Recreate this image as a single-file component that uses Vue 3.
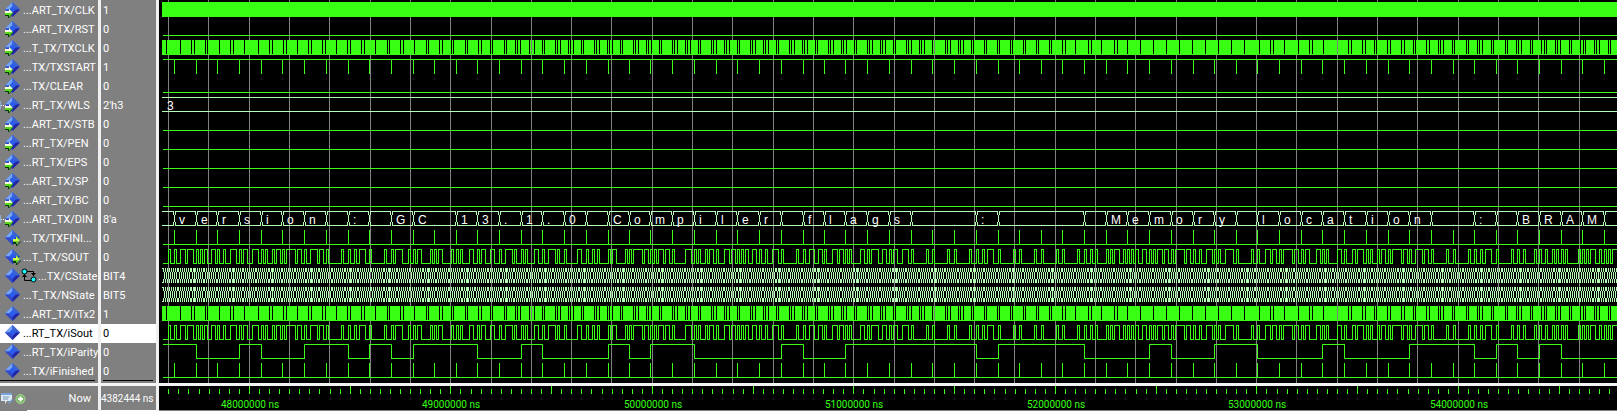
<script setup>
const signals = [
  { name: '...ART_TX/CLK', value: '1', port: 'in' },
  { name: '...ART_TX/RST', value: '0', port: 'in' },
  { name: '...T_TX/TXCLK', value: '0', port: 'in' },
  { name: '...TX/TXSTART', value: '1', port: 'in' },
  { name: '...TX/CLEAR', value: '0', port: 'in' },
  { name: '...RT_TX/WLS', value: "2'h3", port: 'in', bus: true },
  { name: '...ART_TX/STB', value: '0', port: 'in' },
  { name: '...RT_TX/PEN', value: '0', port: 'in' },
  { name: '...RT_TX/EPS', value: '0', port: 'in' },
  { name: '...ART_TX/SP', value: '0', port: 'in' },
  { name: '...ART_TX/BC', value: '0', port: 'in' },
  { name: '...ART_TX/DIN', value: "8'a", port: 'in', bus: true },
  { name: '...TX/TXFINI...', value: '0', port: 'out' },
  { name: '...T_TX/SOUT', value: '0', port: 'out' },
  { name: '...TX/CState', value: 'BIT4', fsm: true },
  { name: '...T_TX/NState', value: 'BIT5' },
  { name: '...ART_TX/iTx2', value: '1' },
  { name: '...RT_TX/iSout', value: '0', selected: true },
  { name: '...RT_TX/iParity', value: '0' },
  { name: '...TX/iFinished', value: '0' },
]

const START = 163
const END = 2400
const PITCH = 19
const top = (row) => 2 + row * PITCH

// Start of every transmitted character on the time axis
const frames = [
  174, 196, 217, 239, 261, 282, 304, 326, 348, 369, 391, 413, 434, 456, 477, 499, 521,
  542, 564, 586, 608, 629, 650, 672, 694, 716, 737, 759, 781, 803, 824, 845, 867, 889,
  911, 932, 954, 976, 998, 1019, 1041, 1062, 1084, 1106, 1127, 1149, 1171, 1193, 1214,
  1236, 1257, 1279, 1301, 1322, 1344, 1366, 1388, 1409, 1431, 1453, 1474, 1496, 1517,
  1539, 1561, 1582, 1604,
]
const text = 'version : GCC13.1.0\nCompiler flags   :    \nMemory location  : BRAM\r'
const BIT = 65 / 30

const gridLines = Array.from({ length: 55 }, (_, i) => Math.floor(168.6 + 40.3 * i))
const ticks = Array.from({ length: 210 }, (_, i) => ({
  x: Math.floor(249.4 + 10.075 * (i - 8)),
  major: (i - 8) % 10 === 0,
}))
const timeLabels = Array.from({ length: 7 }, (_, i) => ({
  x: Math.floor(250 + 201.5 * i),
  label: `${48 + i}000000 ns`,
}))

const flat = (row, high) => `M${START} ${top(row) + (high ? 0 : 14)}.5H${END}`
const flatRows = [1, 4, 6, 7, 8, 9, 10].map((row) => flat(row, false))
const pulses = (row) =>
  flat(row, false) + frames.map((x) => `M${x}.5 ${top(row)}V${top(row) + 14}`).join('')
const startPulses = flat(3, true) + frames.map((x) => `M${x}.5 ${top(3)}V${top(3) + 15}`).join('')

// Serial line: stop bit, start bit, then eight data bits, least significant first
const levels = []
;[152.6, ...frames].forEach((t, k) => {
  const code = k === 0 ? 32 : text.charCodeAt(k - 1)
  const bits = [1, 0]
  for (let b = 0; b < 8; b++) bits.push((code >> b) & 1)
  bits.forEach((v, j) => levels.push({ x: Math.floor(t + 0.3 + j * BIT), v }))
})
const stepPath = (row, list, initial) => {
  const y = (v) => top(row) + (v ? 0.5 : 14.5)
  let last = initial
  let d = `M${START} ${y(initial)}`
  for (const { x, v } of list) {
    if (x >= START && v !== last) {
      d += `H${x + 0.5}V${y(v)}`
      last = v
    }
  }
  return d + `H${END}`
}
const ones = (code) => code.toString(2).replace(/0/g, '').length
const parity = frames.map((x, k) => ({ x, v: k === 0 ? 1 : ones(text.charCodeAt(k)) % 2 }))
parity[66].v = 0

// Character bus: a crossing wherever the value changes
const cells = []
frames.forEach((x, k) => {
  if (k === 0 || text[k] !== text[k - 1]) cells.push({ x, char: text[k].trim() })
})
const busPath = (row, xs) => {
  const y = top(row)
  let d = ''
  let from = START - 1
  for (const x of [...xs, END]) {
    d += `M${from} ${y}.5H${x}M${from} ${y + 14}.5H${x}`
    from = x + 1
  }
  for (const x of xs) {
    d += `M${x - 0.5} ${y}v4M${x + 1.5} ${y}v4M${x + 0.5} ${y + 4}v7`
    d += `M${x - 0.5} ${y + 11}v4M${x + 1.5} ${y + 11}v4`
  }
  return d
}
const dinPath = busPath(11, cells.map((c) => c.x))
const wlsPath = `M162 ${top(5)}.5H${END}M162 ${top(5) + 14}.5H${END}`

const stateEdges = []
for (let x = START + 1; x < 1640; x += BIT) stateEdges.push(Math.floor(x))
const statePath = (row) => {
  let d = busPath(row, stateEdges)
  for (let x = 194; x < 1640; x += 39) d += `M${x}.5 ${top(row)}v15`
  return d
}

// Places where the sampled baud clock leaves a visible gap
const gaps = [
  ...[19, 61, 94, 103, 136, 142, 178, 211, 220, 253, 295, 328, 337, 370, 379, 412, 445, 454,
    487, 496, 529, 562, 571, 604, 613, 646, 682, 688, 721, 730, 763, 799, 805, 838, 847, 874,
    880, 916, 922, 955, 964, 991, 997, 1033, 1039, 1066, 1072, 1081].map((z) => 160 + Math.floor(z / 3)),
]
for (let i = 0; 529 + i * 13 < 1247; i++) {
  const x = 529 + i * 13
  if (x < 1050) gaps.push(x, x + 2)
  else gaps.push(x)
  if (x < 960 && i % 3 !== 1) gaps.push(x + 5)
  if (x >= 1050 && x < 1130 && i % 2) gaps.push(x + 3)
}
gaps.push(
  ...[37, 70, 79, 112, 154, 187, 196, 229, 271, 304, 313, 346, 355, 382, 388, 421, 430, 463,
    472, 499, 505, 538, 547, 574, 580, 589, 616, 622, 658, 664, 691, 697, 706, 733, 739, 775,
    781, 808, 814, 823, 850, 856, 883, 892, 898, 925, 931, 940, 967, 973, 1000, 1009, 1015,
    1042, 1048, 1057, 1084, 1090].map((z) => 1247 + Math.floor(z / 3)),
)
const clockPath = (row) => {
  const y = top(row)
  let d = `M162 ${y + 14}H${END}V${y + 15}H162Z`
  let from = 162
  for (const x of [...gaps, END]) {
    d += `M${from} ${y}H${x}V${y + 14}H${from}Z`
    from = x + 1
  }
  return d
}
</script>

<template>
  <main class="wave">
    <section class="upper">
      <div class="list">
        <table class="signals">
          <tbody>
            <tr v-for="s in signals" :key="s.name" :class="{ selected: s.selected }">
              <th scope="row">
                <div class="name">
                  <svg class="icon" width="22" height="17" viewBox="0 0 22 17">
                    <path v-if="s.bus" d="M0 5h1v8H0z" fill="#8fb0d0" />
                    <path v-if="s.bus" d="M1 9.5h5" stroke="#e8f0ff" stroke-dasharray="1 1" />
                    <path d="M12.5 1L20 8.5L12.5 16L5 8.5Z" fill="#2a5cf0" />
                    <path d="M12.5 1L5 8.5H9L12.5 5Z" fill="#78a6f4" />
                    <path d="M12.5 1L20 8.5H16L12.5 5Z" fill="#3c62cc" />
                    <path d="M5 8.5L12.5 16V12L9 8.5Z" fill="#3448c4" />
                    <path d="M20 8.5L12.5 16V12L16 8.5Z" fill="#2424a0" />
                    <g v-if="s.port === 'in'">
                      <path d="M5 13h4v3l4-4v1l-4 4H8v-2H5z" fill="#063c06" />
                      <path d="M5 10h4V8l4 4l-4 4v-2H5z" fill="#58d818" />
                      <path d="M5 10h4V8l3 3v1H5z" fill="#f4ffe0" />
                    </g>
                    <g v-if="s.port === 'out'">
                      <path d="M13 13h4v3l4-4v1l-4 4h-1v-2h-3z" fill="#063c06" />
                      <path d="M13 10h3V7l4 4l-4 4v-2h-3z" fill="#58d818" />
                      <path d="M13 10h3V8l3 3v1h-6z" fill="#d8ff50" />
                    </g>
                  </svg>
                  <svg v-if="s.fsm" class="fsm" width="16" height="15" viewBox="0 0 16 15">
                    <path d="M5 3.5H12.5V8M10 12.5H3.5V6" fill="none" stroke="#000" />
                    <path d="M10 5h5l-2.5 3zM1 9h5L3.5 6z" fill="#000" />
                    <circle cx="3.5" cy="3.5" r="2.5" fill="#1ff" stroke="#000" />
                    <circle cx="12.5" cy="11.5" r="2.5" fill="#1ff" stroke="#000" />
                  </svg>
                  <span class="text">{{ s.name }}</span>
                </div>
              </th>
              <td>{{ s.value }}</td>
            </tr>
          </tbody>
        </table>
      </div>
      <svg class="plot" shape-rendering="crispEdges">
        <g transform="translate(-159 0)" fill="none">
          <path v-for="x in gridLines" :key="x" class="grid" :d="`M${x}.5 0V383`" />
          <path class="fill" :d="`M162 2H${END}V17H162Z`" />
          <path v-for="d in flatRows" :key="d" class="line" :d="d" />
          <path class="fill" :d="clockPath(2)" />
          <path class="line" :d="startPulses" />
          <path class="bus" :d="wlsPath" />
          <path class="bus" :d="dinPath" />
          <path class="line" :d="pulses(12)" />
          <path class="line" :d="stepPath(13, levels, 0)" />
          <path class="bus" :d="statePath(14)" />
          <path class="bus" :d="statePath(15)" />
          <path class="fill" :d="clockPath(16)" />
          <path class="line" :d="stepPath(17, levels, 0)" />
          <path class="line" :d="stepPath(18, parity, 1)" />
          <path class="line" :d="pulses(19)" />
          <text class="value" x="167" y="110">3</text>
          <text v-for="c in cells" :key="c.x" class="value" :x="c.x + 5" y="224">{{ c.char }}</text>
        </g>
      </svg>
    </section>
    <footer class="lower">
      <div class="now">
        <svg width="30" height="16" viewBox="0 0 30 16">
          <path d="M1 2h11v8H7l-2 3V10H1z" fill="#dce8f4" />
          <path d="M1 2h11v2H1z" fill="#78a4dc" />
          <path d="M3 6h6M3 8h5" stroke="#7898b8" />
          <path d="M8 12l4-4l1 1l-4 4z" fill="#70a0d8" />
          <circle cx="20.5" cy="8" r="4.5" fill="#78b868" stroke="#a8d498" />
          <path d="M18 8h5M20.5 5.5v5" stroke="#fff" stroke-width="2" />
        </svg>
        <span>Now</span>
      </div>
      <div class="now-value">4382444 ns</div>
      <svg class="ruler" shape-rendering="crispEdges">
        <g transform="translate(-159 0)">
          <path v-for="t in ticks" :key="t.x" class="line" :d="`M${t.x}.5 ${t.major ? 0 : 3}V8`" />
          <text v-for="t in timeLabels" :key="t.x" class="time" :x="t.x" y="22">{{ t.label }}</text>
        </g>
      </svg>
    </footer>
  </main>
</template>

<style>
body {
  margin: 0;
  background: #808080;
}
</style>

<style scoped>
.wave {
  font: 11px/19px Roboto, "Liberation Sans", sans-serif;
  color: #fff;
  background: #808080;
  overflow: hidden;
}
.upper,
.lower {
  display: grid;
  grid-template-columns: 159px 1fr;
}
.upper {
  border-bottom: 3px solid #f4f4f4;
}
.list {
  border-right: 3px solid #f0f0f0;
  padding-top: 1px;
  background: linear-gradient(#f0f0f0, #f0f0f0) 98px top / 3px 100% no-repeat;
}
.signals {
  table-layout: fixed;
  width: 100%;
  border-spacing: 0;
}
.signals th,
.signals td {
  padding: 0;
  height: 19px;
  font-weight: normal;
  text-align: left;
  vertical-align: top;
  white-space: nowrap;
  overflow: hidden;
}
.signals th {
  width: 98px;
  border-right: 3px solid #f0f0f0;
}
.signals td {
  padding-left: 2px;
}
.name {
  display: flex;
  align-items: flex-start;
  height: 19px;
}
.icon,
.fsm {
  flex: none;
}
.text {
  padding-left: 1px;
}
.fsm {
  margin: 1px 0 0 -1px;
}
.selected th,
.selected td {
  background: #fff;
  color: #000;
}
.signals tr:last-child th {
  background: linear-gradient(#000, #000) left bottom / 95px 1px no-repeat;
}
.signals tr:last-child td {
  background: linear-gradient(#000, #000) 2px bottom / 50px 1px no-repeat;
}
.plot {
  display: block;
  width: 100%;
  height: 383px;
  background: #000;
}
.grid {
  stroke: #808080;
}
.line {
  fill: none;
  stroke: #38ff14;
}
.fill {
  fill: #38ff14;
}
.bus {
  stroke: #b4ffb4;
}
.value {
  fill: #fff;
  font-family: "Liberation Sans", sans-serif;
  font-size: 12px;
}
.time {
  fill: #38ff14;
  font-size: 10px;
  text-anchor: middle;
}
.lower {
  grid-template-columns: 101px 58px 1fr;
  height: 25px;
}
.now,
.now-value {
  display: flex;
  align-items: center;
  border-right: 3px solid #f0f0f0;
  white-space: nowrap;
}
.now {
  justify-content: space-between;
  padding-right: 7px;
  background: linear-gradient(#fff, #fff) 27px bottom / 100% 1px no-repeat;
}
.now-value {
  font-size: 10px;
  background: linear-gradient(#fff, #fff) left bottom / 100% 1px no-repeat;
}
.ruler {
  display: block;
  width: 100%;
  height: 24px;
  background: #000;
}
</style>
